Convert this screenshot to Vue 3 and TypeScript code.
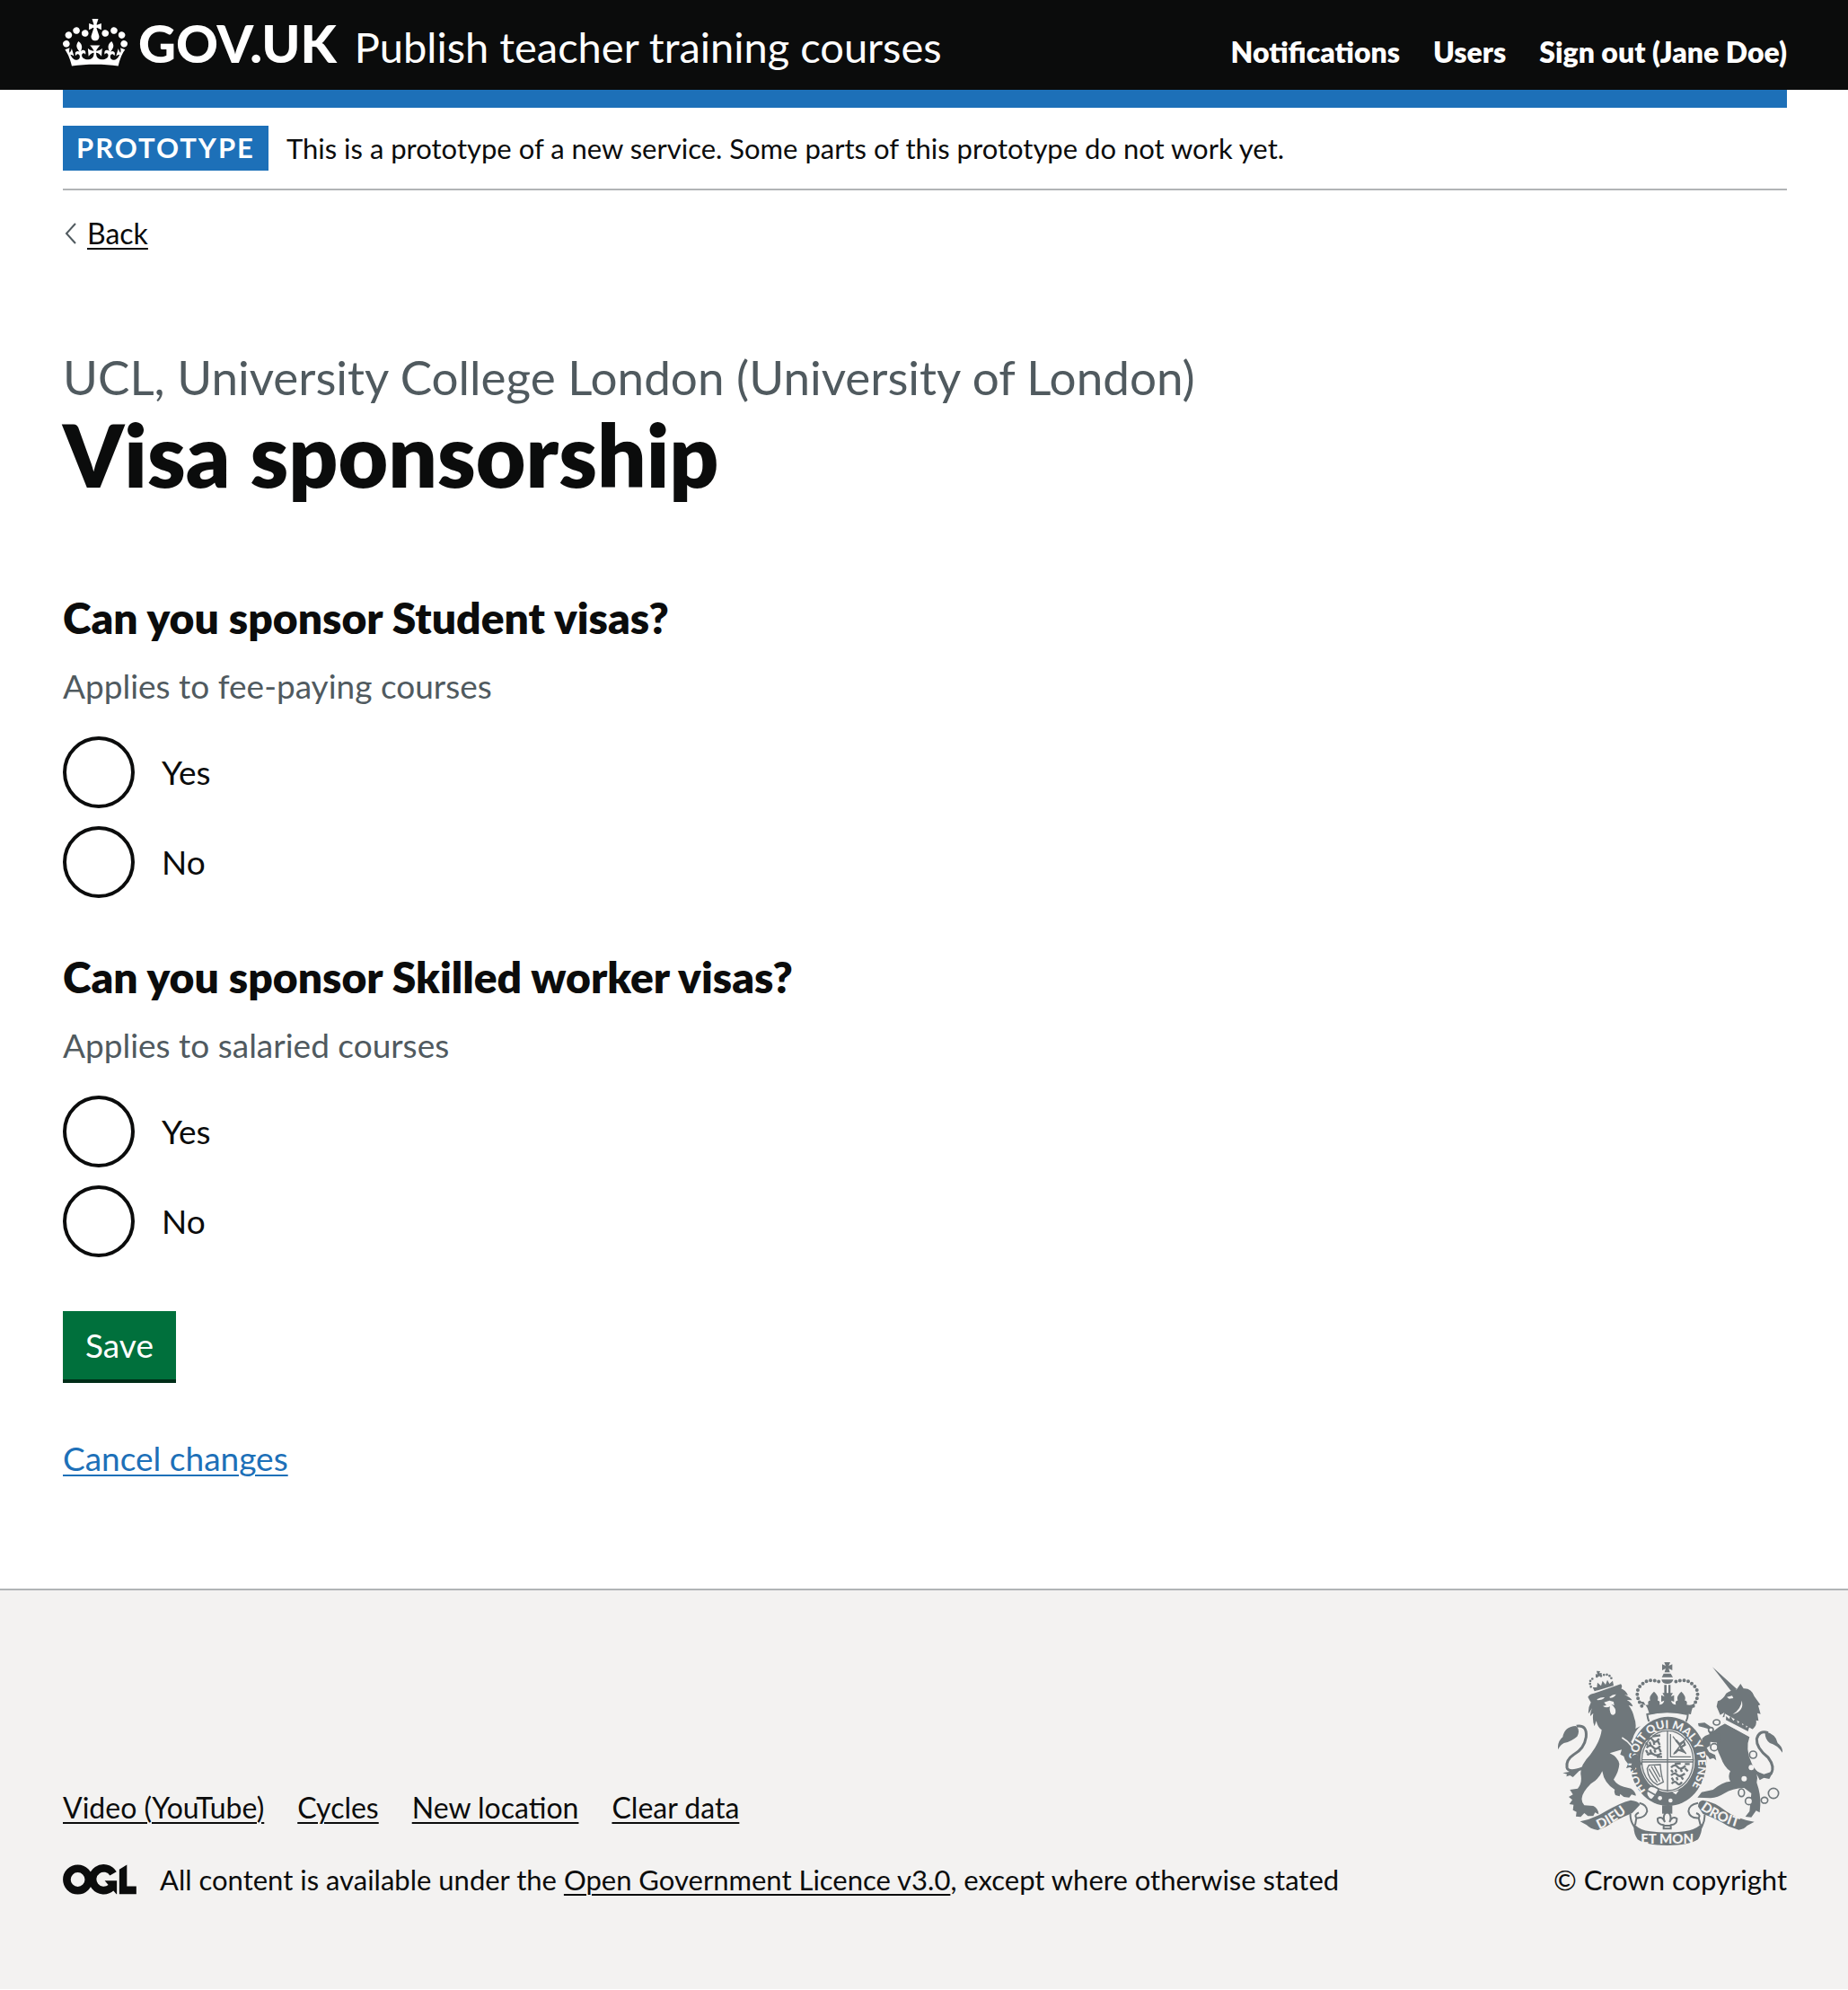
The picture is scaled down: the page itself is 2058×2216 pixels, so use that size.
<script setup lang="ts">
import { reactive } from 'vue'

interface Question {
  id: string
  title: string
  hint: string
}

const navigation: string[] = ['Notifications', 'Users', 'Sign out (Jane Doe)']
const footerLinks: string[] = ['Video (YouTube)', 'Cycles', 'New location', 'Clear data']
const options: string[] = ['Yes', 'No']

const questions: Question[] = [
  { id: 'student', title: 'Can you sponsor Student visas?', hint: 'Applies to fee-paying courses' },
  { id: 'skilled-worker', title: 'Can you sponsor Skilled worker visas?', hint: 'Applies to salaried courses' },
]

const answers = reactive<Record<string, string>>({ student: '', 'skilled-worker': '' })
</script>

<template>
  <div class="page">
    <header class="header">
      <div class="container header-row">
        <a class="home" href="#">
          <svg class="crown" viewBox="0 0 132 97" aria-hidden="true">
            <path
              fill="currentColor"
              fill-rule="evenodd"
              d="M25 30.2c3.5 1.5 7.7-.2 9.1-3.7 1.5-3.6-.2-7.8-3.9-9.2-3.6-1.4-7.6.3-9.1 3.9-1.4 3.5.3 7.5 3.9 9zM9 39.5c3.6 1.5 7.8-.2 9.2-3.7 1.5-3.6-.2-7.8-3.9-9.1-3.6-1.5-7.6.2-9.1 3.8-1.4 3.5.3 7.5 3.8 9zM4.4 57.2c3.5 1.5 7.7-.2 9.1-3.8 1.5-3.6-.2-7.7-3.9-9.1-3.5-1.5-7.6.3-9.1 3.8-1.4 3.5.3 7.6 3.9 9.1zm38.3-21.4c3.5 1.5 7.7-.2 9.1-3.8 1.5-3.6-.2-7.7-3.9-9.1-3.6-1.5-7.6.3-9.1 3.8-1.3 3.6.4 7.7 3.9 9.1zm64.4-5.6c-3.6 1.5-7.8-.2-9.1-3.7-1.5-3.6.2-7.8 3.8-9.2 3.6-1.4 7.7.3 9.2 3.9 1.3 3.5-.4 7.5-3.9 9zm15.9 9.3c-3.6 1.5-7.7-.2-9.1-3.7-1.5-3.6.2-7.8 3.7-9.1 3.6-1.5 7.7.2 9.2 3.8 1.5 3.5-.3 7.5-3.8 9zm4.7 17.7c-3.6 1.5-7.8-.2-9.2-3.8-1.5-3.6.2-7.7 3.9-9.1 3.6-1.5 7.7.3 9.2 3.8 1.3 3.5-.4 7.6-3.9 9.1zM89.3 35.8c-3.6 1.5-7.8-.2-9.2-3.8-1.4-3.6.2-7.7 3.9-9.1 3.6-1.5 7.7.3 9.2 3.8 1.4 3.6-.3 7.7-3.9 9.1zM69.7 17.7l8.9 4.7V9.3l-8.9 2.8c-.2-.3-.5-.6-.9-.9L72.4 0H59.6l3.5 11.2c-.3.3-.6.5-.9.9l-8.8-2.8v13.1l8.8-4.7c.3.3.6.7.9.9l-5 15.4v.1c-.2.8-.4 1.6-.4 2.4 0 4.1 3.1 7.5 7 8.1h.2c.3 0 .7.1 1 .1.4 0 .7 0 1-.1h.2c4-.6 7.1-4.1 7.1-8.1 0-.8-.1-1.7-.4-2.4V34l-5.1-15.4c.4-.2.7-.6 1-.9zM66 92.8c16.9 0 32.8 1.1 47.1 3.2 4-16.9 8.9-26.7 14-33.5l-9.6-3.4c1 4.9 1.1 7.2 0 10.2-1.5-1.4-3-4.3-4.2-8.7L108.6 76c2.8-2 5-3.2 7.5-3.3-4.4 9.4-10 11.9-13.6 11.2-4.3-.8-6.3-4.6-5.6-7.9 1-4.7 5.7-5.9 8-.5 4.3-8.7-3-11.4-7.6-8.8 7.1-7.2 7.9-13.5 2.1-21.1-8 6.1-8.1 12.3-4.5 20.8-4.7-5.4-12.1-2.5-9.5 6.2 3.4-5.2 7.9-2 7.2 3.1-.6 4.3-6.4 7.8-13.5 7.2-10.3-.9-10.9-8-11.2-13.8 2.5-.5 7.1 1.8 11 7.3L80.2 60c-4.1 4.4-8 5.3-12.3 5.4 1.4-4.4 8-11.6 8-11.6H55.5s6.4 7.2 7.9 11.6c-4.2-.1-8-1-12.3-5.4l1.4 16.4c3.9-5.5 8.5-7.7 10.9-7.3-.3 5.8-.9 12.8-11.1 13.8-7.2.6-12.9-2.9-13.5-7.2-.7-5 3.8-8.3 7.1-3.1 2.7-8.7-4.6-11.6-9.4-6.2 3.7-8.5 3.6-14.7-4.6-20.8-5.8 7.6-5 13.9 2.2 21.1-4.7-2.6-11.9.1-7.7 8.8 2.3-5.5 7.1-4.2 8.1.5.7 3.3-1.3 7.1-5.7 7.9-3.5.7-9-1.8-13.5-11.2 2.5.1 4.7 1.3 7.5 3.3l-4.7-15.4c-1.2 4.4-2.7 7.2-4.3 8.7-1.1-3-.9-5.3 0-10.2l-9.5 3.4c5 6.9 9.9 16.7 14 33.5 14.8-2.1 30.8-3.2 47.7-3.2z"
            />
          </svg>
          <span class="wordmark">GOV.UK</span>
        </a>
        <a class="service" href="#">Publish teacher training courses</a>
        <nav class="nav" aria-label="Account">
          <a v-for="item in navigation" :key="item" href="#">{{ item }}</a>
        </nav>
      </div>
    </header>

    <div class="container">
      <div class="bar"></div>
      <div class="phase">
        <strong class="tag">PROTOTYPE</strong>
        <span>This is a prototype of a new service. Some parts of this prototype do not work yet.</span>
      </div>
      <a class="back" href="#">
        <svg width="14" height="24" viewBox="0 0 14 24" aria-hidden="true">
          <path d="M12 1 2 12l10 11" fill="none" stroke="#505a5f" stroke-width="2" />
        </svg>
        <span>Back</span>
      </a>

      <main class="main">
        <h1>
          <span class="caption">UCL, University College London (University of London)</span>
          Visa sponsorship
        </h1>
        <form @submit.prevent>
          <fieldset v-for="q in questions" :key="q.id" :aria-describedby="q.id + '-hint'">
            <legend>{{ q.title }}</legend>
            <p :id="q.id + '-hint'" class="hint">{{ q.hint }}</p>
            <div class="radios">
              <div v-for="o in options" :key="o" class="radio">
                <input :id="q.id + '-' + o" v-model="answers[q.id]" type="radio" :name="q.id" :value="o" />
                <label :for="q.id + '-' + o">{{ o }}</label>
              </div>
            </div>
          </fieldset>
          <button class="save" type="submit">Save</button>
        </form>
        <a class="cancel" href="#">Cancel changes</a>
      </main>
    </div>

    <footer class="footer">
      <div class="container footer-row">
        <div class="meta">
          <nav class="footer-links" aria-label="Footer">
            <a v-for="link in footerLinks" :key="link" href="#">{{ link }}</a>
          </nav>
          <div class="licence">
            <svg class="ogl" viewBox="0 0 484 196" role="img" aria-label="Open Government Licence">
              <circle cx="98" cy="98" r="72" fill="none" stroke="currentColor" stroke-width="51" />
              <path d="M331 59A73 73 0 1 0 318 150" fill="none" stroke="currentColor" stroke-width="51" />
              <path d="M275 106h80v88h-3l-53-61zM421 0v143h62v51H371V32z" fill="currentColor" />
            </svg>
            <span>All content is available under the <a href="#">Open Government Licence v3.0</a>, except where otherwise stated</span>
          </div>
        </div>
        <a class="copyright" href="#">
          <svg class="crest" viewBox="42 36 750 612" aria-hidden="true">
            <defs>
              <path id="motto-line" d="M336 465A103 121 0 1 1 478 466" />
              <path id="dieu-line" d="M180 594Q232 572 294 520" />
              <path id="droit-line" d="M517 526Q570 568 654 590" />
            </defs>

            <!-- lion -->
            <g class="ink">
              <path d="M158 120l6 13 64-19-3-16-11 10-7-13-6 16-10-13-5 17-12-11-2 16z" />
              <path class="beads" d="M152 118Q142 94 164 89M172 84h2M186 82Q214 68 223 96" />
              <path d="M171 65l12 1-3 7 8-1v10l-20 3v-10l6 2z" />
              <path d="M142 152Q148 142 162 140L252 109Q259 116 253 124 268 130 276 146L264 145Q282 152 290 163L272 162Q288 170 292 184L278 180Q292 198 297 222 304 240 301 258L318 249Q300 264 292 290L286 302Q302 318 312 350L322 374 312 396 303 388 296 402 288 386 270 390 276 376 266 362 262 350 250 344 255 328 215 340Q242 352 247 376 246 400 228 428 240 446 262 452L286 458Q302 468 302 482L288 478 280 488 262 486 250 476 248 484 234 480Q228 468 232 462 196 440 190 400 180 425 152 442 124 470 122 490 120 504 130 514L160 516Q178 526 178 544L166 538 160 550 142 550 130 540 118 553 102 551 104 536 92 530 94 512 80 510 90 496 78 486 92 478 82 462 108 458Q124 440 118 410 116 380 150 345 184 300 188 262 176 256 170 232L164 250Q156 230 160 206L150 216Q149 204 156 190L144 208Q142 188 152 170 146 160 142 152z" />
              <path class="line thick" d="M104 250Q140 244 136 286 130 326 94 345 68 362 72 388 78 408 124 390" />
              <path d="M42 328Q40 300 58 286 64 250 102 249 118 262 106 284 88 300 62 306 50 312 42 328zM58 406l22-4 42-12-30 30-10-6-12 4 2-8z" />
            </g>
            <g class="paper">
              <path d="M172 160q14-8 26-7-6 10-24 10zM214 152q10-9 22-9-6 12-20 12zM196 170l18-6 14 4 2 12-10-4q18 14 14 30-6 10-14 4-8-14-4-26-14 6-24-2l12-2z" />
              <path class="line" d="M256 288Q292 308 308 356" />
            </g>

            <!-- unicorn -->
            <g class="ink">
              <path d="M558 52l82 74-18 8zM572 184l4-18q18-6 28-26 16-12 34-12l14-20 10 16q26-2 36 26l20 28-7 3 8 28-11-3 4 26-8-2q4 16-12 30l-88-42-12 2 6-16-14 8z" />
              <path d="M592 236l90 50q-16 40 8 90 24 34 16 62 14 40 12 76l-2 24-12-6-16 22-20-2 14-18 6-60-24-18q-40 2-66 18-22 14-46 16l-44-2 14-18 38-8q30-26 58-28-10-16 0-34-20-12-32-46-20-36-10-66-24 6-26-6l-8-24-12-4-18-4-2-10 22-2 18 12 12 16q18-16 40-26z" />
              <path d="M582 274q-36-4-58 16l-3 18 10 10-8 16 20 16 6 10 12-4 10 8-4-18-20-10-8-14 12-8 0-12 32 4z" />
              <path class="line thick" d="M694 392Q728 432 754 408 768 386 744 354 704 322 706 292 714 262 744 272" />
              <path d="M734 268q36 8 42 38 18 14 16 32-18-26-42-32-18-14-16-38zM700 398l30 12 32-10-14 26-18-4-14 8z" />
            </g>
            <g class="paper">
              <path d="M606 152l18-4 4 8-14 2zM656 164q10 34-30 46 28-18 30-46z" />
              <path d="M600 208l92 52-10 24-88-46z" />
            </g>
            <path class="ink" d="M604 216l10 10 4-10 10 16 8-10 8 18 9-11 6 18 10-10 2 18 12-10-6 22-74-38z" />
            <g class="rings">
              <ellipse cx="572" cy="237" rx="11" ry="9" /><circle cx="553" cy="262" r="8" />
              <circle cx="564" cy="320" r="12" /><circle cx="694" cy="345" r="12" />
              <ellipse cx="655" cy="472" rx="10" ry="13" /><circle cx="680" cy="500" r="12" />
              <ellipse cx="732" cy="497" rx="11" ry="10" /><circle cx="762" cy="474" r="17" />
            </g>
            <g class="paper"><circle cx="688" cy="388" r="9" /><circle cx="664" cy="425" r="9" /></g>

            <!-- royal crown -->
            <g class="ink">
              <path d="M397 36h20l-5 12 12-5v20l-12-6 4 13h-18l4-13-12 6V43l12 5zM389 86l6-12h24l7 12zM388 94h39q-2 14-20 14t-19-14zM397 112h8v34h-8zM411 112h7v34h-7z" />
              <path class="beads big" d="M322 182Q294 140 318 114 344 86 386 103M494 182Q522 140 496 114 472 86 430 103" />
              <path d="M314 168q12 14 30 10-4-14 6-14-6-14 13-30 18 16 12 30 10 0 6 14 14-2 16-14l-10 4v-22l11 5-7-12h35l-7 12 11-5v22l-10-4q2 12 16 14-4-14 6-14-6-14 12-30 18 16 12 30 10 0 6 14 20 4 31-10-14 20-17 42-68-14-138 0-6-24-20-42z" />
              <path class="line" d="M346 234q-4-10-6-24 66-16 136 0 0 12-6 24" />
            </g>

            <!-- garter and shield -->
            <ellipse class="ink" cx="410" cy="367" rx="128" ry="149" />
            <ellipse class="paper" cx="408" cy="365" rx="91" ry="105" />
            <ellipse class="outline" cx="408" cy="365" rx="86" ry="100" />
            <path class="outline" d="M408 264v204M321 362h175M322 369h173" />
            <g class="outline">
              <path d="M418 276v76h68M426 284l44 58M472 286l-44 58" />
              <path d="M346 380l38-2q2 34 10 58l-20 10q-30-16-34-54zM354 384l28 50M364 382l20 38M346 392l28 46" />
            </g>
            <g class="beasts">
              <path d="M338 296q12-14 20 0t22-4M336 304l6 10M348 302l4 12M362 302l2 10M376 300l6 12" />
              <path d="M338 322q12-14 22-2t24-4M336 330l6 10M350 328l4 12M364 328l4 10M380 324l6 12" />
              <path d="M340 346q12-10 22-2t26-4M358 284l26-4M372 352h18" />
              <path d="M420 388q12-14 22-2t26-4M420 396l6 8M434 394l4 10M452 394l4 8M466 390l10 10" />
              <path d="M420 414q12-12 20-2t26-4M422 422l6 10M438 420l4 10M454 418l6 10" />
              <path d="M422 442q10-12 18-2t16-4M432 376l20-2M466 376h16" />
              <path d="M436 296l12 14 14-10 4 12-14 8 8 14-16-6-12 12" />
            </g>
            <g class="paper">
              <text class="motto"><textPath href="#motto-line">HONI SOIT QUI MAL Y PENSE</textPath></text>
              <circle cx="383" cy="490" r="7" /><circle cx="418" cy="498" r="7" />
              <path d="M424 470l22-6-10 14z" />
            </g>
            <path class="ink" d="M286 350l20-8 16 32-10 22-10-8-6 14-12-16 6-14z" />
            <path class="buckle" d="M376 458Q346 440 340 464 332 484 354 496 368 484 378 462zM340 464l28 16" />

            <!-- scroll -->
            <g class="ink">
              <path d="M116 568Q160 560 200 535 250 505 285 497 312 500 316 512L290 540Q232 564 205 584L175 597Q148 592 138 580z" />
              <path d="M698 569Q640 560 604 534 566 502 526 497 510 500 510 518L526 542Q574 560 612 584L646 596Q664 594 674 582z" />
              <path d="M296 576Q316 598 350 601 407 608 466 601 500 596 522 576 526 602 510 628 480 648 407 648 336 648 308 628 292 604 296 576z" />
              <path d="M390 514h34v28h-34z" />
            </g>
            <g class="outline bold">
              <path d="M314 506Q340 512 340 534 332 558 304 556 296 546 312 538M284 542Q282 566 300 590M304 556L300 580" />
              <path d="M510 506Q478 512 478 534 482 558 512 556 520 546 504 540M532 544Q534 566 520 590M512 556L518 580" />
              <path d="M407 534q18 14 8 36 8-22 24-12 2 20-20 22v12h-24v-12q-22-2-20-22 16-10 24 12-10-22 8-36zM392 582h30" />
            </g>
            <g class="paper">
              <text class="scroll"><textPath href="#dieu-line">DIEU</textPath></text>
              <text class="scroll"><textPath href="#droit-line">DROIT</textPath></text>
              <text class="scroll" x="407" y="641" text-anchor="middle">ET MON</text>
            </g>
          </svg>
          <span>© Crown copyright</span>
        </a>
      </div>
    </footer>
  </div>
</template>

<style>
body {
  margin: 0;
  background: #fff;
}
</style>

<style scoped>
.page {
  color: #0b0c0c;
  font-family: Lato, "Liberation Sans", sans-serif;
  font-size: 31px;
  line-height: 40px;
}
.container {
  padding: 0 68px 0 70px;
}
a {
  color: inherit;
  text-decoration-thickness: 2px;
  text-underline-offset: 4px;
}

/* Header */
.header {
  background: #0b0c0c;
  color: #fff;
}
.header-row {
  display: flex;
  align-items: baseline;
  min-height: 82px;
  padding-top: 18px;
}
.header a {
  text-decoration: none;
}
.home {
  line-height: 60px;
  white-space: nowrap;
}
.crown {
  width: 72px;
  height: 53px;
  margin-right: 12px;
  vertical-align: -4px;
}
.wordmark {
  font-size: 58px;
  font-weight: 900;
}
.service {
  margin-left: 20px;
  font-size: 47px;
  line-height: 60px;
}
.nav {
  display: flex;
  gap: 37px;
  margin-left: auto;
  font-size: 32px;
  font-weight: 800;
}

/* Phase banner */
.bar {
  height: 20px;
  background: #1d70b8;
}
.phase {
  display: flex;
  align-items: center;
  gap: 20px;
  padding: 20px 0;
  border-bottom: 2px solid #b1b4b6;
}
.tag {
  padding: 0 15px 2px;
  background: #1d70b8;
  color: #fff;
  font-weight: 700;
  letter-spacing: 2px;
  line-height: 48px;
}
.back {
  display: inline-flex;
  align-items: center;
  gap: 11px;
  margin-top: 28px;
  padding-left: 2px;
  font-size: 32px;
  text-decoration: none;
}
.back span {
  text-decoration: underline 2px;
  text-underline-offset: 4px;
}

/* Form */
.main {
  padding: 110px 0 120px;
  font-size: 37px;
  line-height: 50px;
}
h1 {
  margin: 0 0 104px;
  font-size: 96px;
  font-weight: 800;
  line-height: 100px;
}
.caption {
  display: block;
  margin-bottom: 6px;
  color: #505a5f;
  font-size: 53px;
  font-weight: 400;
  line-height: 60px;
}
fieldset {
  min-width: 0;
  margin: 0 0 60px;
  padding: 0;
  border: 0;
}
legend {
  padding: 0;
  font-size: 48px;
  font-weight: 800;
  line-height: 56px;
}
.hint {
  margin: 23px 0 31px;
  color: #505a5f;
}
.radios {
  display: flex;
  flex-direction: column;
  gap: 20px;
}
.radio {
  display: flex;
  align-items: center;
  gap: 30px;
}
.radio input {
  width: 80px;
  height: 80px;
  margin: 0;
  border: 4px solid #0b0c0c;
  border-radius: 50%;
  background: #fff;
  appearance: none;
}
.radio input:checked {
  background: radial-gradient(circle, #0b0c0c 19px, #fff 20px);
}
.save {
  display: block;
  margin: 0 0 59px;
  padding: 0 25px;
  border: 0;
  border-bottom: 4px solid #002d18;
  background: #00703c;
  color: #fff;
  font: inherit;
  line-height: 76px;
}
.cancel {
  color: #1d70b8;
}

/* Footer */
.footer {
  padding: 80px 0 102px;
  border-top: 2px solid #b1b4b6;
  background: #f3f2f1;
}
.footer-row {
  display: flex;
  align-items: flex-end;
  justify-content: space-between;
}
.meta {
  display: flex;
  flex-direction: column;
  gap: 40px;
}
.footer-links {
  display: flex;
  gap: 37px;
  font-size: 32px;
}
.licence {
  display: flex;
  align-items: center;
  gap: 26px;
}
.ogl {
  width: 82px;
  height: 34px;
  flex: none;
}
.copyright {
  display: flex;
  flex-direction: column;
  align-items: center;
  gap: 18px;
  text-decoration: none;
}

/* Crest */
.crest {
  width: 250px;
  height: 204px;
}
.ink {
  fill: #6f777b;
}
.paper {
  fill: #f3f2f1;
}
.ink .line {
  fill: none;
  stroke: #6f777b;
  stroke-width: 6;
}
.ink .thick {
  stroke-width: 9;
}
.paper .line {
  fill: none;
  stroke: #f3f2f1;
  stroke-width: 5;
}
.beads {
  fill: none;
  stroke: #6f777b;
  stroke-width: 8;
  stroke-linecap: round;
  stroke-dasharray: 0 10;
}
.beads.big {
  stroke-width: 12;
  stroke-dasharray: 0 14;
}
.rings {
  fill: #f3f2f1;
  stroke: #6f777b;
  stroke-width: 5;
}
.outline {
  fill: none;
  stroke: #6f777b;
  stroke-width: 4;
}
.outline.bold {
  stroke-width: 6;
}
.beasts {
  fill: none;
  stroke: #6f777b;
  stroke-width: 7;
}
.buckle {
  fill: #f3f2f1;
  stroke: #6f777b;
  stroke-width: 5;
}
.motto {
  font-size: 38px;
  font-weight: 900;
}
.scroll {
  font-size: 45px;
  font-weight: 900;
}
</style>
